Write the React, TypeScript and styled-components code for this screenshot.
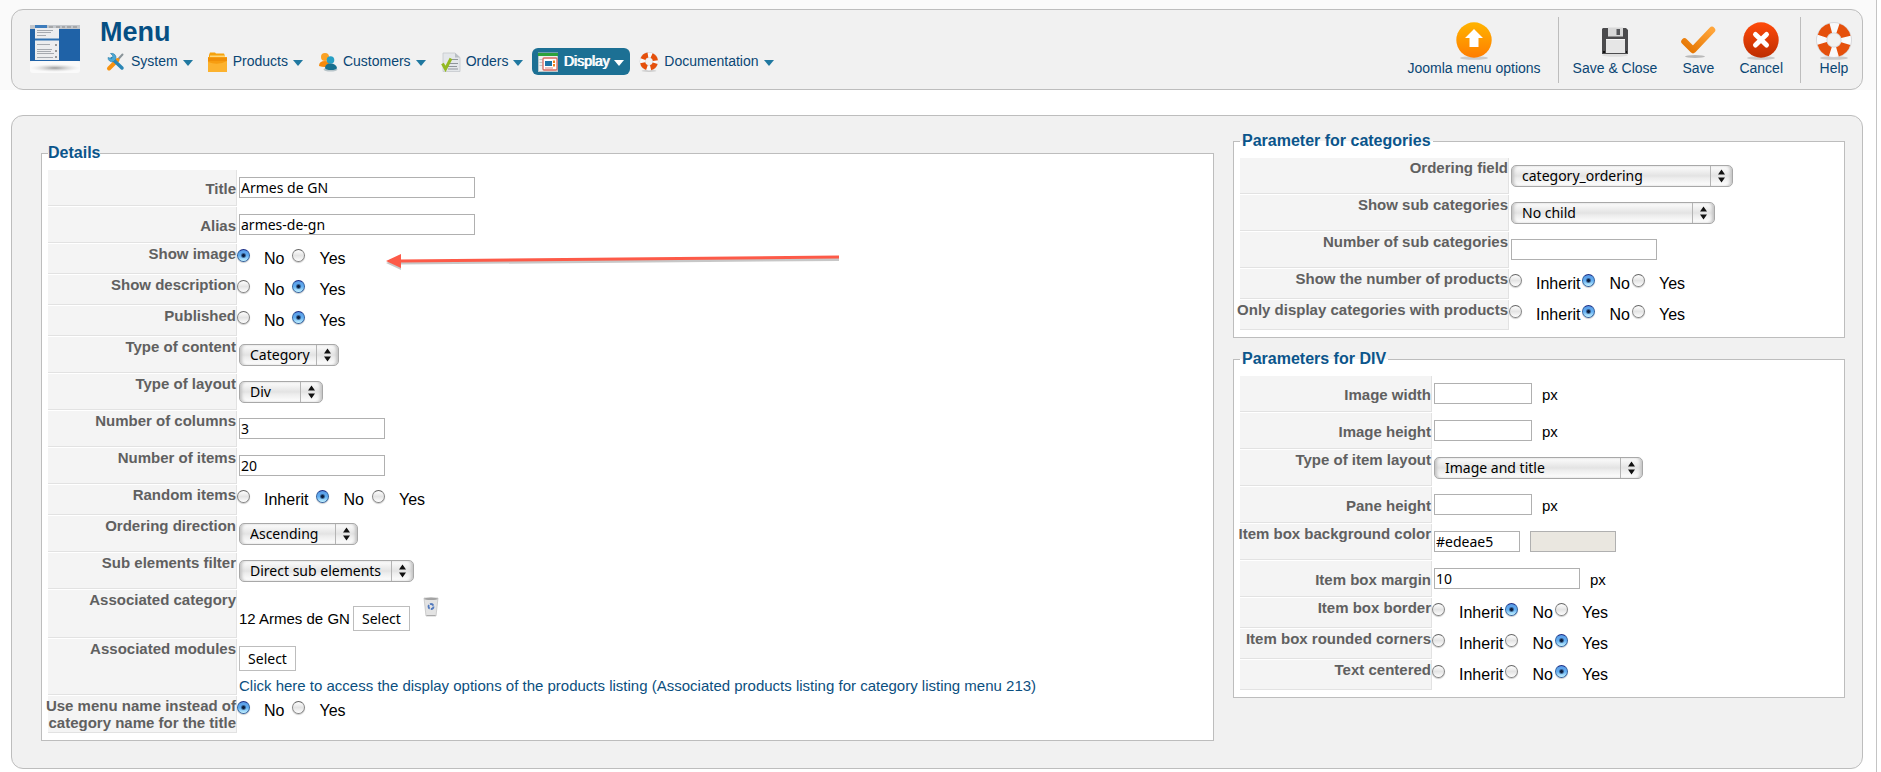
import React, { ReactNode, useId } from "react";
import styled, { createGlobalStyle, css } from "styled-components";

const sans = `"Liberation Sans", Arial, Helvetica, sans-serif`;
const human = `"Noto Sans", "Lucida Grande", sans-serif`;

const GlobalStyle = createGlobalStyle`
  *, *::before, *::after { box-sizing: border-box; }
  body { margin: 0; background: #fff; font: 15px/17px ${sans}; color: #000; }
`;

/* ---------- page frame ---------- */

const Page = styled.div`
  min-height: 100vh;
  margin-right: 4px;
  border-right: 1px solid #c4c4c4;
  background: #fff;
`;

const TopStrip = styled.div`
  padding: 9px 13px 0 11px;
  background: #fafafa;
`;

const box = css`
  border: 1px solid #bdbdbd;
  border-radius: 12px;
  background: #f1f1f1;
`;

const Header = styled.header`
  ${box}
  display: flex;
  align-items: stretch;
  height: 81px;
  padding: 7px 9px 6px 18px;
`;

const HeaderArt = styled.div`
  flex: none;
  width: 50px;
  padding-top: 8px;
`;

const HeaderMain = styled.div`
  flex: 1;
  padding-left: 20px;
`;

const Title = styled.h1`
  margin: 0;
  font-size: 27px;
  line-height: 31px;
  color: #054f83;
`;

const Nav = styled.nav`
  display: flex;
  gap: 3px;
`;

const NavLink = styled.a<{ $active?: boolean }>`
  display: flex;
  align-items: center;
  gap: 5px;
  height: 27px;
  padding: 0 6px;
  border-radius: 6px;
  font-size: 14px;
  text-decoration: none;
  white-space: nowrap;
  color: ${(p) => (p.$active ? "#fff" : "#0a4674")};
  background: ${(p) => (p.$active ? "#1c7094" : "transparent")};
  ${(p) => p.$active && "text-shadow: 1px 0 0 #fff;"}
`;

const Caret = styled.span<{ $active?: boolean }>`
  margin-top: 2px;
  border: 5px solid transparent;
  border-top: 6px solid ${(p) => (p.$active ? "#fff" : "#2078a0")};
  border-bottom: 0;
`;

const Toolbar = styled.div`
  display: flex;
  align-items: stretch;
`;

const ToolGroup = styled.div`
  display: flex;
  gap: 22px;
  & + & {
    margin-left: 17px;
    padding-left: 14px;
    border-left: 1px solid #bdbdbd;
  }
`;

const ToolButton = styled.button`
  display: flex;
  flex-direction: column;
  align-items: center;
  min-width: 36px;
  padding: 5px 0 0;
  border: 0;
  background: none;
  font: 14px/18px ${sans};
  color: #0a4674;
  svg { margin-bottom: -1px; }
`;

const Panel = styled.main`
  ${box}
  display: grid;
  grid-template-columns: 23fr 12fr;
  gap: 19px;
  align-items: start;
  margin: 25px 13px 0 11px;
  padding: 16px 17px 27px 29px;
`;

const LeftColumn = styled.div`
  padding-top: 12px;
`;

const RightColumn = styled.div`
  display: grid;
  gap: 12px;
`;

/* ---------- form parts ---------- */

const Group = styled.fieldset<{ $label: number }>`
  --label: ${(p) => p.$label}px;
  min-width: 0;
  margin: 0;
  padding: 8px 6px 7px;
  border: 1px solid #bdbdbd;
  background: #fff;
`;

const Legend = styled.legend<{ $inset?: boolean }>`
  padding: ${(p) => (p.$inset ? "0 2px" : "0")};
  font-size: 16px;
  line-height: 18px;
  font-weight: bold;
  color: #0b558b;
`;

const RowBox = styled.div<{ $h: number }>`
  position: relative;
  display: flex;
  min-height: ${(p) => p.$h}px;
  & + & { margin-top: 1px; }
`;

const LabelCell = styled.div<{ $middle?: boolean }>`
  flex: none;
  display: flex;
  justify-content: flex-end;
  align-items: ${(p) => (p.$middle ? "center" : "flex-start")};
  width: var(--label);
  padding-top: 1px;
  border-right: 1px solid #e2e2e2;
  border-bottom: 1px solid #e2e2e2;
  background: #f4f4f4;
  font-weight: bold;
  text-align: right;
  white-space: pre;
  color: #606060;
`;

const Field = styled.div`
  display: flex;
  align-items: flex-start;
  gap: 10px;
  padding: 7px 0 0 2px;
`;

const TextBox = styled.input<{ $w: number }>`
  width: ${(p) => p.$w}px;
  height: 21px;
  padding: 0 1px;
  border: 1px solid #b0b0b0;
  border-radius: 0;
  background: #fff;
  font: 14px/19px ${human};
  color: #000;
`;

const Unit = styled.span`
  line-height: 23px;
`;

const Swatch = styled.span`
  width: 86px;
  height: 21px;
  border: 1px solid #b0b0b0;
  background: #eae7e0;
`;

const SelectWrap = styled.span<{ $w: number }>`
  display: grid;
  width: ${(p) => p.$w}px;
  height: 22px;
  > * { grid-area: 1 / 1; }
  > svg { justify-self: end; pointer-events: none; }
`;

const NativeSelect = styled.select`
  appearance: none;
  width: 100%;
  height: 22px;
  padding: 0 24px 0 10px;
  border: 1px solid #a8a8a8;
  border-radius: 5px;
  background: linear-gradient(#fdfdfd 0%, #e3e3e3 50%, #ececec 60%, #fff 100%);
  box-shadow: inset 3px 0 3px -1px #c4c4c4, inset -3px 0 3px -1px #c4c4c4;
  font: 14px/20px ${human};
  color: #000;
`;

const RadioSet = styled.div<{ $gap: number }>`
  display: flex;
  gap: ${(p) => p.$gap}px;
  padding-top: 4px;
`;

const RadioLabel = styled.label`
  display: flex;
  gap: 14px;
  font-size: 16px;
  line-height: 22px;
`;

const Radio = styled.input`
  appearance: none;
  width: 13px;
  height: 13px;
  margin: 1px 0 0;
  border: 1px solid #858585;
  border-top-color: #666;
  border-radius: 50%;
  background: linear-gradient(#fff, #e4e4e4 50%, #fdfdfd);
  box-shadow: 0 1px 1px #ccc;
  &:checked {
    border-color: #33609c;
    border-top-color: #1c2f86;
    background:
      radial-gradient(circle at 50% 50%, #0b1c3c 0 1px, transparent 3px),
      linear-gradient(#5a9be6, #62aef2 50%, #c4f2ff);
  }
`;

const PickButton = styled.button`
  width: 57px;
  height: 25px;
  padding: 0;
  border: 1px solid #bdbdbd;
  background: #fff;
  font: 14px/22px ${human};
  color: #000;
`;

const Picker = styled.div`
  display: flex;
  align-items: flex-start;
  padding: 7px 0 0 2px;
  line-height: 25px;
  > span, > ${PickButton} { margin: 9px 3px 0 0; }
`;

const IconButton = styled.button`
  margin-left: 10px;
  padding: 0;
  border: 0;
  background: none;
  line-height: 0;
`;

const Modules = styled.div`
  display: flex;
  flex-direction: column;
  align-items: flex-start;
  gap: 6px;
`;

const TextLink = styled.a`
  color: #0b4f80;
  text-decoration: none;
`;

const Arrow = styled.svg`
  position: absolute;
  left: 338px;
  top: 6px;
  pointer-events: none;
`;

/* ---------- icons ---------- */

const HeaderPicture = () => (
  <svg width="50" height="48" viewBox="0 0 50 48" aria-hidden="true">
    <defs>
      <radialGradient id="hs"><stop offset="0" stopColor="#999" /><stop offset="1" stopColor="#ddd" stopOpacity="0" /></radialGradient>
    </defs>
    <rect x="0" y="36" width="50" height="12" rx="3" fill="#fafafa" />
    <ellipse cx="25" cy="43" rx="25" ry="4" fill="url(#hs)" />
    <rect x="0" y="1" width="50" height="35" fill="#1f62a7" />
    <rect x="0" y="0" width="50" height="4" fill="#c3c7cc" />
    <rect x="5" y="0" width="12" height="3" fill="#3d7cbc" />
    <path d="M19 2h4M26 2h4M32 2h3M37 2h4M43 2h4" stroke="#888" strokeWidth="1" />
    <rect x="5" y="3" width="24" height="32" fill="#ecedef" />
    <path d="M7 5.500h16M7 7.500h14M7 10.500h9M7 19.500h13M7 24.500h15M7 26.500h14M7 28.500h17M7 32.500h16" stroke="#a6aab0" />
    <path d="M5 14.500h24" stroke="#2d70b2" strokeWidth="2" />
    <path d="M25 20h2M25 26h2M25 32h2" stroke="#444" strokeWidth="1" />
  </svg>
);

const ToolsIcon = () => (
  <svg width="20" height="20" viewBox="0 0 20 20" aria-hidden="true">
    <path d="M16.500 2.500l-5 5.500" stroke="#8a9499" strokeWidth="2" strokeLinecap="round" />
    <path d="M11.500 8L3 16.500" stroke="#f7930f" strokeWidth="4" strokeLinecap="round" />
    <path d="M6 6.500l10 9.500" stroke="#2a86b5" strokeWidth="3.500" strokeLinecap="round" />
    <path d="M2 5.500A4 4 0 0 0 7.500 9.500L9.500 7.500A4.200 4.200 0 0 0 4.500 1.500L7 4 5.500 6.500z" fill="#4aa9d6" stroke="#2b7ba6" strokeWidth=".6" />
  </svg>
);

const BoxIcon = () => (
  <svg width="20" height="20" viewBox="0 0 20 20" aria-hidden="true">
    <path d="M1 3l1-2.500h5L8 1.500h8L17 4v3H1V4z" fill="#f6a20d" />
    <path d="M2 3.500h15V5H2z" fill="#ffd87a" />
    <rect x="0" y="5" width="19" height="15" fill="#f79d10" />
    <rect x="0" y="6" width="19" height="3" fill="#f08f08" />
    <path d="M0 20V10q10 4 19-1v11z" fill="#fdbb3c" opacity=".7" />
  </svg>
);

const PeopleIcon = () => (
  <svg width="20" height="20" viewBox="0 0 20 20" aria-hidden="true">
    <circle cx="7" cy="5" r="4" fill="#fba224" />
    <path d="M1 14q0-5 6-5 5 0 5 5-5 2-11 0z" fill="#f58a0c" />
    <ellipse cx="12.500" cy="17.500" rx="7" ry="2" fill="#b7c4c9" />
    <circle cx="12.500" cy="8" r="3.800" fill="#28a0c4" />
    <path d="M7 16q0-4.500 5.500-4.500T19 16q-1 2-6 2t-6-2z" fill="#17708f" />
  </svg>
);

const OrderIcon = () => (
  <svg width="20" height="20" viewBox="0 0 20 20" aria-hidden="true">
    <path d="M2 1h12l5 4.500V19.500H2z" fill="#e4e7ea" stroke="#c5c9cd" strokeWidth=".8" />
    <path d="M14 1l5 4.500h-5z" fill="#b9bec4" />
    <path d="M10 7.500h7M8 11.500h9M7 14.500h9M7 17h10" stroke="#8f959b" strokeWidth="1.200" />
    <path d="M1.500 11.500L4.500 17 10 6.500" fill="none" stroke="#93b922" strokeWidth="3" />
  </svg>
);

const DisplayIcon = () => (
  <svg width="20" height="20" viewBox="0 0 20 20" aria-hidden="true">
    <rect x=".5" y="1" width="19" height="18.500" fill="#eef0f0" stroke="#b7c7cc" />
    <rect x="0" y="1" width="20" height="3" fill="#2da13c" />
    <path d="M1.500 7.500h3M1.500 10.500h3M1.500 13.500h3" stroke="#c2c6c8" />
    <rect x="5" y="6" width="14" height="12" rx="1" fill="#fff" stroke="#d8685f" strokeWidth="1.300" />
    <rect x="7" y="9" width="7" height="5" fill="#1c74a8" />
    <path d="M16 8.500v6" stroke="#f0801c" strokeWidth="2" strokeDasharray="2.500 1" />
    <path d="M7 16h8" stroke="#dd877e" />
  </svg>
);

/* Ring of four orange segments on the diagonals, white bands on the axes. */
const Buoy = ({ size }: { size: number }) => (
  <svg width={size} height={size} viewBox="0 0 38 38" aria-hidden="true">
    <ellipse cx="19" cy="36" rx="14" ry="1.800" fill="#cbcbcb" />
    <circle cx="19" cy="18" r="12.300" fill="none" stroke="#d0d0d4" strokeWidth="11" />
    <circle cx="19" cy="18" r="12.300" fill="none" stroke="#f9f9fa" strokeWidth="9.600" />
    <circle cx="19" cy="18" r="12.300" fill="none" stroke="#e5500c" strokeWidth="9.600" strokeDasharray="12 7.320" strokeDashoffset="-3.660" />
  </svg>
);

const UpIcon = () => (
  <svg width="38" height="38" viewBox="0 0 38 38" aria-hidden="true">
    <defs><linearGradient id="up" x2="0" y2="1"><stop stopColor="#ffb400" /><stop offset="1" stopColor="#ff7d00" /></linearGradient></defs>
    <ellipse cx="19" cy="36" rx="14" ry="1.800" fill="#cbcbcb" />
    <circle cx="19" cy="18" r="17.700" fill="url(#up)" />
    <path d="M19 7l9 9h-4.500v9h-9v-9H10z" fill="#fff" />
  </svg>
);

const DiskIcon = () => (
  <svg width="38" height="38" viewBox="0 0 38 38" aria-hidden="true">
    <ellipse cx="19" cy="33" rx="13" ry="1.800" fill="#dedede" />
    <path d="M7 6h23l2 2v24H6V7z" fill="#4b4b4d" />
    <rect x="12" y="5.500" width="15" height="9" fill="#d8d8d8" />
    <rect x="20.500" y="7" width="3.500" height="6" fill="#55565a" />
    <rect x="10" y="17" width="19" height="14" fill="#e6e6e6" />
    <path d="M10 17.500h19" stroke="#fafafa" />
    <path d="M7 29h2v2H7zM30 29h1v2h-1z" fill="#111" />
  </svg>
);

const CheckIcon = () => (
  <svg width="38" height="38" viewBox="0 0 38 38" aria-hidden="true">
    <defs><linearGradient id="ck" x1="0" y1="1" x2="1" y2="0"><stop stopColor="#e47400" /><stop offset="1" stopColor="#ffa53a" /></linearGradient></defs>
    <ellipse cx="16" cy="34.500" rx="10" ry="1.500" fill="#b9b9b9" />
    <path d="M5.500 19.500l8.500 8.500L33 8" fill="none" stroke="url(#ck)" strokeWidth="6.500" strokeLinecap="round" strokeLinejoin="round" />
  </svg>
);

const CancelIcon = () => (
  <svg width="38" height="38" viewBox="0 0 38 38" aria-hidden="true">
    <defs><linearGradient id="cn" x2="0" y2="1"><stop stopColor="#ff4a0a" /><stop offset="1" stopColor="#bd2d00" /></linearGradient></defs>
    <ellipse cx="19" cy="36" rx="14" ry="1.800" fill="#cbcbcb" />
    <circle cx="19" cy="18" r="17.700" fill="url(#cn)" />
    <path d="M13.500 12.500l11 10.500M24.500 12.500l-11 10.500" stroke="#fff" strokeWidth="5" strokeLinecap="round" />
  </svg>
);

const TrashIcon = () => (
  <svg width="16" height="20" viewBox="0 0 16 20" aria-hidden="true">
    <path d="M1 1h14l-2 18H3z" fill="#e3e3e3" stroke="#c4c4c4" strokeWidth=".8" />
    <ellipse cx="8" cy="1.800" rx="7" ry="1.300" fill="#a3a3a3" />
    <circle cx="8" cy="9.500" r="2.500" fill="none" stroke="#5179bd" strokeWidth="1.800" strokeDasharray="4 1.200" />
    <path d="M3.500 18.500h9" stroke="#aaa" />
  </svg>
);

const SelectArrows = () => (
  <svg width="24" height="22" viewBox="0 0 24 22" aria-hidden="true">
    <path d="M1.500 1v20" stroke="#b4b4b4" />
    <path d="M9 9.500l3.500-5 3.500 5zM9 12.500l3.500 5 3.500-5z" fill="#111" />
  </svg>
);

/* ---------- composed controls ---------- */

type RowProps = { label: string; h?: number; middle?: boolean; id?: string; children: ReactNode };

const Row = ({ label, h = 36, middle, id, children }: RowProps) => (
  <RowBox $h={h}>
    <LabelCell $middle={middle}>{id ? <label htmlFor={id}>{label}</label> : label}</LabelCell>
    {children}
  </RowBox>
);

const InputRow = ({ label, value = "", w, middle, unit, children }:
  { label: string; value?: string; w: number; middle?: boolean; unit?: string; children?: ReactNode }) => {
  const id = useId();
  return (
    <Row label={label} middle={middle} id={id}>
      <Field>
        <TextBox id={id} type="text" $w={w} defaultValue={value} />
        {unit && <Unit>{unit}</Unit>}
        {children}
      </Field>
    </Row>
  );
};

const SelectRow = ({ label, value, w }: { label: string; value: string; w: number }) => {
  const id = useId();
  return (
    <Row label={label} id={id}>
      <Field>
        <SelectWrap $w={w}>
          <NativeSelect id={id} defaultValue={value}><option>{value}</option></NativeSelect>
          <SelectArrows />
        </SelectWrap>
      </Field>
    </Row>
  );
};

const RadioRow = ({ label, options, value, gap = 8, h = 30, children }:
  { label: string; options: string[]; value: string; gap?: number; h?: number; children?: ReactNode }) => {
  const name = useId();
  return (
    <Row label={label} h={h}>
      <RadioSet $gap={gap} role="radiogroup" aria-label={label}>
        {options.map((o) => (
          <RadioLabel key={o}>
            <Radio type="radio" name={name} defaultChecked={o === value} />
            {o}
          </RadioLabel>
        ))}
      </RadioSet>
      {children}
    </Row>
  );
};

const yesNo = ["No", "Yes"];
const triState = ["Inherit", "No", "Yes"];

const navItems = [
  { text: "System", icon: <ToolsIcon /> },
  { text: "Products", icon: <BoxIcon /> },
  { text: "Customers", icon: <PeopleIcon /> },
  { text: "Orders", icon: <OrderIcon /> },
  { text: "Display", icon: <DisplayIcon />, active: true },
  { text: "Documentation", icon: <Buoy size={20} /> },
];

const toolGroups = [
  [{ text: "Joomla menu options", icon: <UpIcon /> }],
  [
    { text: "Save & Close", icon: <DiskIcon /> },
    { text: "Save", icon: <CheckIcon /> },
    { text: "Cancel", icon: <CancelIcon /> },
  ],
  [{ text: "Help", icon: <Buoy size={38} /> }],
];

export default function App() {
  return (
    <Page>
      <GlobalStyle />
      <TopStrip>
        <Header>
          <HeaderArt><HeaderPicture /></HeaderArt>
          <HeaderMain>
            <Title>Menu</Title>
            <Nav>
              {navItems.map((n) => (
                <NavLink key={n.text} href="#" $active={n.active}>
                  {n.icon}
                  {n.text}
                  <Caret $active={n.active} />
                </NavLink>
              ))}
            </Nav>
          </HeaderMain>
          <Toolbar>
            {toolGroups.map((g) => (
              <ToolGroup key={g[0].text}>
                {g.map((t) => (
                  <ToolButton key={t.text} type="button">{t.icon}{t.text}</ToolButton>
                ))}
              </ToolGroup>
            ))}
          </Toolbar>
        </Header>
      </TopStrip>

      <Panel>
        <LeftColumn>
          <Group $label={189}>
            <Legend>Details</Legend>
            <InputRow label="Title" value="Armes de GN" w={236} middle />
            <InputRow label="Alias" value="armes-de-gn" w={236} middle />
            <RadioRow label="Show image" options={yesNo} value="No">
              <Arrow width="456" height="24" viewBox="0 0 456 24" aria-hidden="true">
                <g opacity=".22" transform="translate(0 2)">
                  <path d="M0 11L15 4v14zM14 9.500L453 6v3L14 12.500z" fill="#000" />
                </g>
                <path d="M0 11L15 4v14zM14 9.500L453 5.500v3L14 12.500z" fill="#fd5a48" />
              </Arrow>
            </RadioRow>
            <RadioRow label="Show description" options={yesNo} value="Yes" />
            <RadioRow label="Published" options={yesNo} value="Yes" />
            <SelectRow label="Type of content" value="Category" w={100} />
            <SelectRow label="Type of layout" value="Div" w={84} />
            <InputRow label="Number of columns" value="3" w={146} />
            <InputRow label="Number of items" value="20" w={146} />
            <RadioRow label="Random items" options={triState} value="No" />
            <SelectRow label="Ordering direction" value="Ascending" w={119} />
            <SelectRow label="Sub elements filter" value="Direct sub elements" w={175} />
            <Row label="Associated category" h={48}>
              <Picker>
                <span>12 Armes de GN</span>
                <PickButton type="button">Select</PickButton>
                <IconButton type="button" aria-label="Remove category"><TrashIcon /></IconButton>
              </Picker>
            </Row>
            <Row label="Associated modules" h={56}>
              <Field>
                <Modules>
                  <PickButton type="button">Select</PickButton>
                  <TextLink href="#">
                    Click here to access the display options of the products listing (Associated products listing for category listing menu 213)
                  </TextLink>
                </Modules>
              </Field>
            </Row>
            <RadioRow label={"Use menu name instead of\ncategory name for the title"} options={yesNo} value="No" h={37} />
          </Group>
        </LeftColumn>

        <RightColumn>
          <Group $label={269}>
            <Legend $inset>Parameter for categories</Legend>
            <SelectRow label="Ordering field" value="category_ordering" w={222} />
            <SelectRow label="Show sub categories" value="No child" w={204} />
            <InputRow label="Number of sub categories" w={146} />
            <RadioRow label="Show the number of products" options={triState} value="No" gap={2} />
            <RadioRow label="Only display categories with products" options={triState} value="No" gap={2} />
          </Group>
          <Group $label={192}>
            <Legend $inset>Parameters for DIV</Legend>
            <InputRow label="Image width" w={98} middle unit="px" />
            <InputRow label="Image height" w={98} middle unit="px" />
            <SelectRow label="Type of item layout" value="Image and title" w={209} />
            <InputRow label="Pane height" w={98} middle unit="px" />
            <InputRow label="Item box background color" value="#edeae5" w={86}><Swatch /></InputRow>
            <InputRow label="Item box margin" value="10" w={146} middle unit="px" />
            <RadioRow label="Item box border" options={triState} value="No" gap={2} />
            <RadioRow label="Item box rounded corners" options={triState} value="Yes" gap={2} />
            <RadioRow label="Text centered" options={triState} value="Yes" gap={2} />
          </Group>
        </RightColumn>
      </Panel>
    </Page>
  );
}
